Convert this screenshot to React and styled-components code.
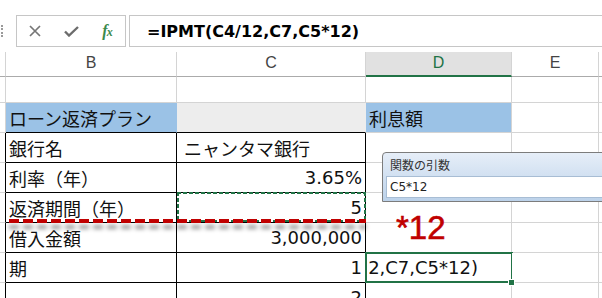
import React from "react"
import styled, { createGlobalStyle } from "styled-components"

const GRID = "#d4d4d4"
const GREEN = "#217346"
const BLACK = "#000"

const Global = createGlobalStyle`
  body {
    margin: 0;
    background: #fff;
  }
`

const Page = styled.div`
  position: relative;
  width: 602px;
  height: 298px;
  overflow: hidden;
  background: #fff;
  font-family: "DejaVu Sans", "Noto Sans CJK JP", sans-serif;
`

const FormulaBar = styled.div`
  display: flex;
  align-items: center;
  height: 52px;
  padding-top: 10px;
  box-sizing: border-box;
`

const Grip = styled.div`
  width: 0;
  height: 12px;
  margin: 0 13px 0 1px;
  border-left: 2px dotted #9a9a9a;
`

const IconBox = styled.div`
  display: grid;
  grid-template-columns: repeat(3, 1fr);
  align-items: center;
  justify-items: center;
  width: 110px;
  height: 32px;
  box-sizing: border-box;
  border: 1px solid #c6c6c6;
`

const Fx = styled.span`
  font-family: "Liberation Serif", serif;
  font-style: italic;
  font-weight: bold;
  font-size: 16px;
  color: #3b8a4c;
  letter-spacing: -1px;

  small {
    font-size: 12px;
  }
`

const FormulaInput = styled.div`
  flex: 1;
  display: flex;
  align-items: center;
  height: 32px;
  margin-left: 3px;
  padding-left: 17px;
  box-sizing: border-box;
  border: 1px solid #c6c6c6;
  border-right: none;
  font-weight: bold;
  font-size: 16px;
  color: #000;
  white-space: nowrap;
`

const Sheet = styled.div`
  display: grid;
  grid-template-columns: 6px 171px 189px 146px 87px 1fr;
  grid-template-rows: 25px 26px repeat(7, 30px);
`

const Corner = styled.div`
  border-right: 1px solid ${GRID};
  border-bottom: 1px solid #ababab;
`

const ColHead = styled.div`
  display: flex;
  align-items: center;
  justify-content: center;
  padding-bottom: 2px;
  box-sizing: border-box;
  background: ${(p) => (p.$active ? "#e1e1e1" : "#fff")};
  border-right: 1px solid ${GRID};
  border-bottom: ${(p) => (p.$active ? `2px solid ${GREEN}` : "1px solid #ababab")};
  font-family: "Liberation Sans", sans-serif;
  font-size: 16px;
  color: ${(p) => (p.$active ? GREEN : "#444")};
`

const RowHead = styled.div`
  border-right: 1px solid ${(p) => p.$rb || GRID};
  border-bottom: 1px solid ${GRID};
`

const Cell = styled.div`
  position: relative;
  display: flex;
  align-items: center;
  justify-content: ${(p) => (p.$num ? "flex-end" : "flex-start")};
  padding: 0 3px 0 ${(p) => p.$indent || 3}px;
  box-sizing: border-box;
  min-width: 0;
  background: ${(p) => p.$bg || "#fff"};
  border-right: 1px solid ${(p) => p.$rb || GRID};
  border-bottom: 1px solid ${(p) => p.$bb || GRID};
  font-size: 18px;
  color: #111;
  white-space: nowrap;

  ${(p) =>
    p.$ants &&
    `
    &::after {
      content: "";
      position: absolute;
      top: -1px;
      left: 0;
      right: -1px;
      bottom: 0;
      background:
        repeating-linear-gradient(90deg, ${GREEN} 0 4px, transparent 4px 6px) top / 100% 2px no-repeat,
        repeating-linear-gradient(90deg, ${GREEN} 0 4px, transparent 4px 6px) bottom / 100% 2px no-repeat,
        repeating-linear-gradient(180deg, ${GREEN} 0 4px, transparent 4px 6px) left / 2px 100% no-repeat,
        repeating-linear-gradient(180deg, ${GREEN} 0 4px, transparent 4px 6px) right / 2px 100% no-repeat;
    }
  `}
`

const EditCell = styled(Cell)`
  &::after {
    content: "";
    position: absolute;
    top: -1px;
    left: -1px;
    right: -2px;
    bottom: -1px;
    border: 2px solid ${GREEN};
  }
`

const EditClip = styled.div`
  flex: 1;
  display: flex;
  justify-content: flex-end;
  overflow: hidden;
  padding-right: 30px;
  font-size: 18px;
`

const Handle = styled.span`
  position: absolute;
  right: -4px;
  bottom: -4px;
  width: 5px;
  height: 5px;
  background: ${GREEN};
  border: 1px solid #fff;
  z-index: 2;
`

const CutLine = styled.div`
  position: absolute;
  left: 9px;
  top: 219px;
  width: 357px;
  height: 4px;
  background: repeating-linear-gradient(90deg, #c00000 0 10px, transparent 10px 14px);
  filter: drop-shadow(0 6px 2px rgba(0, 0, 0, 0.4));
`

const Note = styled.div`
  position: absolute;
  left: 396px;
  top: 209px;
  font-family: "Liberation Sans", sans-serif;
  font-size: 33px;
  color: #c00000;
  -webkit-text-stroke: 0.6px #c00000;
`

const ArgTip = styled.div`
  position: absolute;
  left: 382px;
  top: 152px;
  width: 240px;
  padding: 0 0 3px 3px;
  box-sizing: border-box;
  background: linear-gradient(#e6eef8, #bcd2ea);
  border: 1px solid #7c7c7c;
  border-top-left-radius: 4px;
`

const ArgTitle = styled.div`
  height: 23px;
  line-height: 23px;
  padding-left: 4px;
  font-family: "Noto Sans CJK JP", sans-serif;
  font-size: 12px;
  color: #333;
`

const ArgInput = styled.div`
  height: 22px;
  line-height: 20px;
  padding-left: 3px;
  box-sizing: border-box;
  background: #fff;
  border: 1px solid #a8bdd4;
  border-right: none;
  font-size: 12px;
  color: #222;
`

const CrossIcon = () => (
  <svg width="12" height="12" viewBox="0 0 12 12">
    <path d="M1 1 L11 11 M11 1 L1 11" stroke="#767676" strokeWidth="1.7" fill="none" />
  </svg>
)

const CheckIcon = () => (
  <svg width="15" height="11" viewBox="0 0 15 11">
    <path d="M1 5.5 L5 9.5 L14 1" stroke="#6c6c6c" strokeWidth="2.4" fill="none" />
  </svg>
)

const App = () => {
  return (
    <Page>
      <Global />
      <FormulaBar>
        <Grip />
        <IconBox>
          <CrossIcon />
          <CheckIcon />
          <Fx>
            f<small>x</small>
          </Fx>
        </IconBox>
        <FormulaInput>=IPMT(C4/12,C7,C5*12)</FormulaInput>
      </FormulaBar>

      <Sheet>
        <Corner />
        <ColHead>B</ColHead>
        <ColHead>C</ColHead>
        <ColHead $active>D</ColHead>
        <ColHead>E</ColHead>
        <ColHead />

        {/* row 1 */}
        <RowHead />
        <Cell />
        <Cell />
        <Cell />
        <Cell />
        <Cell />

        {/* row 2 */}
        <RowHead />
        <Cell $bg="#9bc2e6" $rb="#9bc2e6" $bb={BLACK}>ローン返済プラン</Cell>
        <Cell $bg="#ededed" $rb="#ededed" $bb={BLACK} />
        <Cell $bg="#9bc2e6">利息額</Cell>
        <Cell />
        <Cell />

        {/* row 3 */}
        <RowHead $rb={BLACK} />
        <Cell $rb={BLACK} $bb={BLACK}>銀行名</Cell>
        <Cell $rb={BLACK} $bb={BLACK} $indent={7}>ニャンタマ銀行</Cell>
        <Cell />
        <Cell />
        <Cell />

        {/* row 4 */}
        <RowHead $rb={BLACK} />
        <Cell $rb={BLACK} $bb={BLACK}>利率（年）</Cell>
        <Cell $rb={BLACK} $bb={BLACK} $num>3.65%</Cell>
        <Cell />
        <Cell />
        <Cell />

        {/* row 5 */}
        <RowHead $rb={BLACK} />
        <Cell $rb={BLACK} $bb={BLACK}>返済期間（年）</Cell>
        <Cell $rb={BLACK} $bb={BLACK} $num $ants>5</Cell>
        <Cell />
        <Cell />
        <Cell />

        {/* row 6 */}
        <RowHead $rb={BLACK} />
        <Cell $rb={BLACK} $bb={BLACK}>借入金額</Cell>
        <Cell $rb={BLACK} $bb={BLACK} $num>3,000,000</Cell>
        <Cell />
        <Cell />
        <Cell />

        {/* row 7 */}
        <RowHead $rb={BLACK} />
        <Cell $rb={BLACK} $bb={BLACK}>期</Cell>
        <Cell $rb={BLACK} $bb={BLACK} $num>1</Cell>
        <EditCell>
          <EditClip>=IPMT(C4/12,C7,C5*12)</EditClip>
          <Handle />
        </EditCell>
        <Cell />
        <Cell />

        {/* row 8 */}
        <RowHead $rb={BLACK} />
        <Cell $rb={BLACK} $bb={BLACK} />
        <Cell $rb={BLACK} $bb={BLACK} $num>2</Cell>
        <Cell />
        <Cell />
        <Cell />
      </Sheet>

      <CutLine />
      <Note>*12</Note>

      <ArgTip>
        <ArgTitle>関数の引数</ArgTitle>
        <ArgInput>C5*12</ArgInput>
      </ArgTip>
    </Page>
  )
}

export default App
